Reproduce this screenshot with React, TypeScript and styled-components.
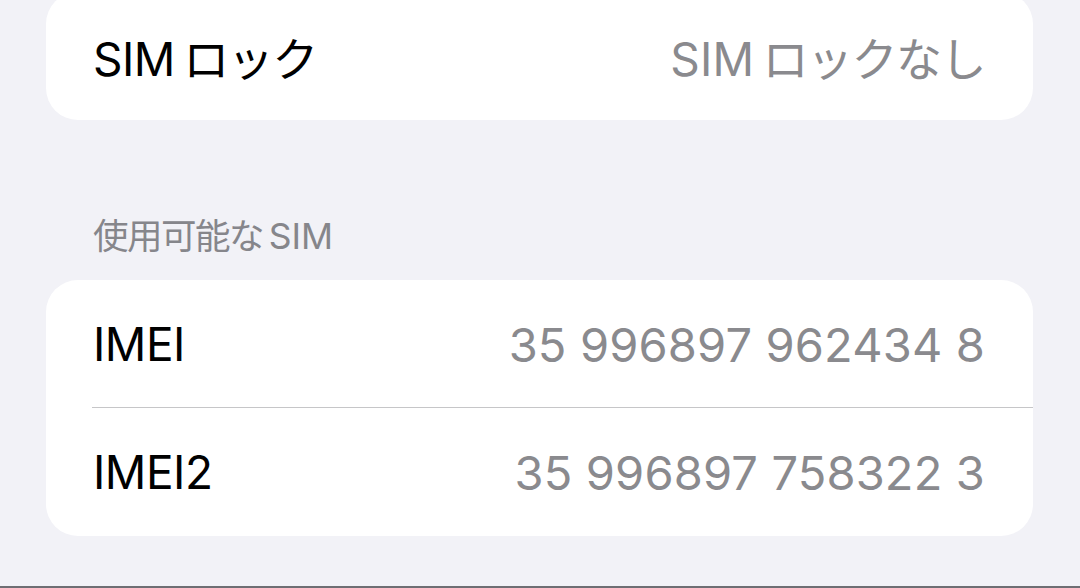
import styled, { createGlobalStyle } from "styled-components";

const GlobalStyle = createGlobalStyle`
  html, body {
    margin: 0;
    padding: 0;
    background: #f2f2f7;
  }
  * {
    box-sizing: border-box;
  }
`;

const Screen = styled.div`
  height: 588px;
  overflow: hidden;
  background: #f2f2f7;
  padding: 0 47px 0 46px;
  border-bottom: 2px solid #6e6e73;
  font-family: "Inter", "Noto Sans CJK JP", sans-serif;
  -webkit-font-smoothing: antialiased;
`;

const Group = styled.div<{ $offset?: number }>`
  margin-top: ${(props) => (props.$offset ? `${props.$offset}px` : "0")};
  background: #ffffff;
  border-radius: 32px;
  overflow: hidden;
`;

const SectionHeader = styled.div`
  margin: 97px 0 23px;
  padding-left: 47px;
  height: 40px;
  line-height: 40px;
  font-size: 35.5px;
  color: #86868b;
`;

const Row = styled.div<{ $divider?: boolean }>`
  position: relative;
  display: flex;
  align-items: center;
  justify-content: space-between;
  height: 128px;
  padding: 0 48px 0 47px;

  ${(props) =>
    props.$divider &&
    `
    &::after {
      content: "";
      position: absolute;
      left: 46px;
      right: 0;
      bottom: 0;
      height: 1.5px;
      background: #c6c6c8;
    }
  `}
`;

const Label = styled.span`
  font-size: 46px;
  color: #000000;
  letter-spacing: -0.5px;
`;

const Value = styled.span<{ $numeric?: boolean }>`
  font-size: ${(props) => (props.$numeric ? "47px" : "46px")};
  color: #8a8a8e;
  letter-spacing: ${(props) => (props.$numeric ? "0.15px" : "0.2px")};
`;

// kana/kanji runs get a little air next to latin, like the system font mix does
const Kana = styled.span<{ $lead?: boolean }>`
  margin-left: ${(props) => (props.$lead ? "0.18em" : "0")};
  letter-spacing: -1.5px;
`;

const Latin = styled.span<{ $lead?: boolean }>`
  margin-left: ${(props) => (props.$lead ? "0.16em" : "0")};
`;

function Mixed({ text }: { text: string }) {
  const runs = text.match(/[\x00-\x7f]+|[^\x00-\x7f]+/g) ?? [];
  return (
    <>
      {runs.map((run, i) =>
        /^[\x00-\x7f]/.test(run) ? (
          <Latin key={i} $lead={i > 0}>
            {run}
          </Latin>
        ) : (
          <Kana key={i} $lead={i > 0}>
            {run}
          </Kana>
        )
      )}
    </>
  );
}

type Item = { label: string; value: string };

const imeiItems: Item[] = [
  { label: "IMEI", value: "35 996897 962434 8" },
  { label: "IMEI2", value: "35 996897 758322 3" },
];

export default function App() {
  return (
    <>
      <GlobalStyle />
      <Screen>
        <Group $offset={-8}>
          <Row>
            <Label>
              <Mixed text="SIMロック" />
            </Label>
            <Value>
              <Mixed text="SIMロックなし" />
            </Value>
          </Row>
        </Group>

        <SectionHeader>
          <Mixed text="使用可能なSIM" />
        </SectionHeader>

        <Group>
          {imeiItems.map((item, i) => (
            <Row key={item.label} $divider={i < imeiItems.length - 1}>
              <Label>{item.label}</Label>
              <Value $numeric>{item.value}</Value>
            </Row>
          ))}
        </Group>
      </Screen>
    </>
  );
}
